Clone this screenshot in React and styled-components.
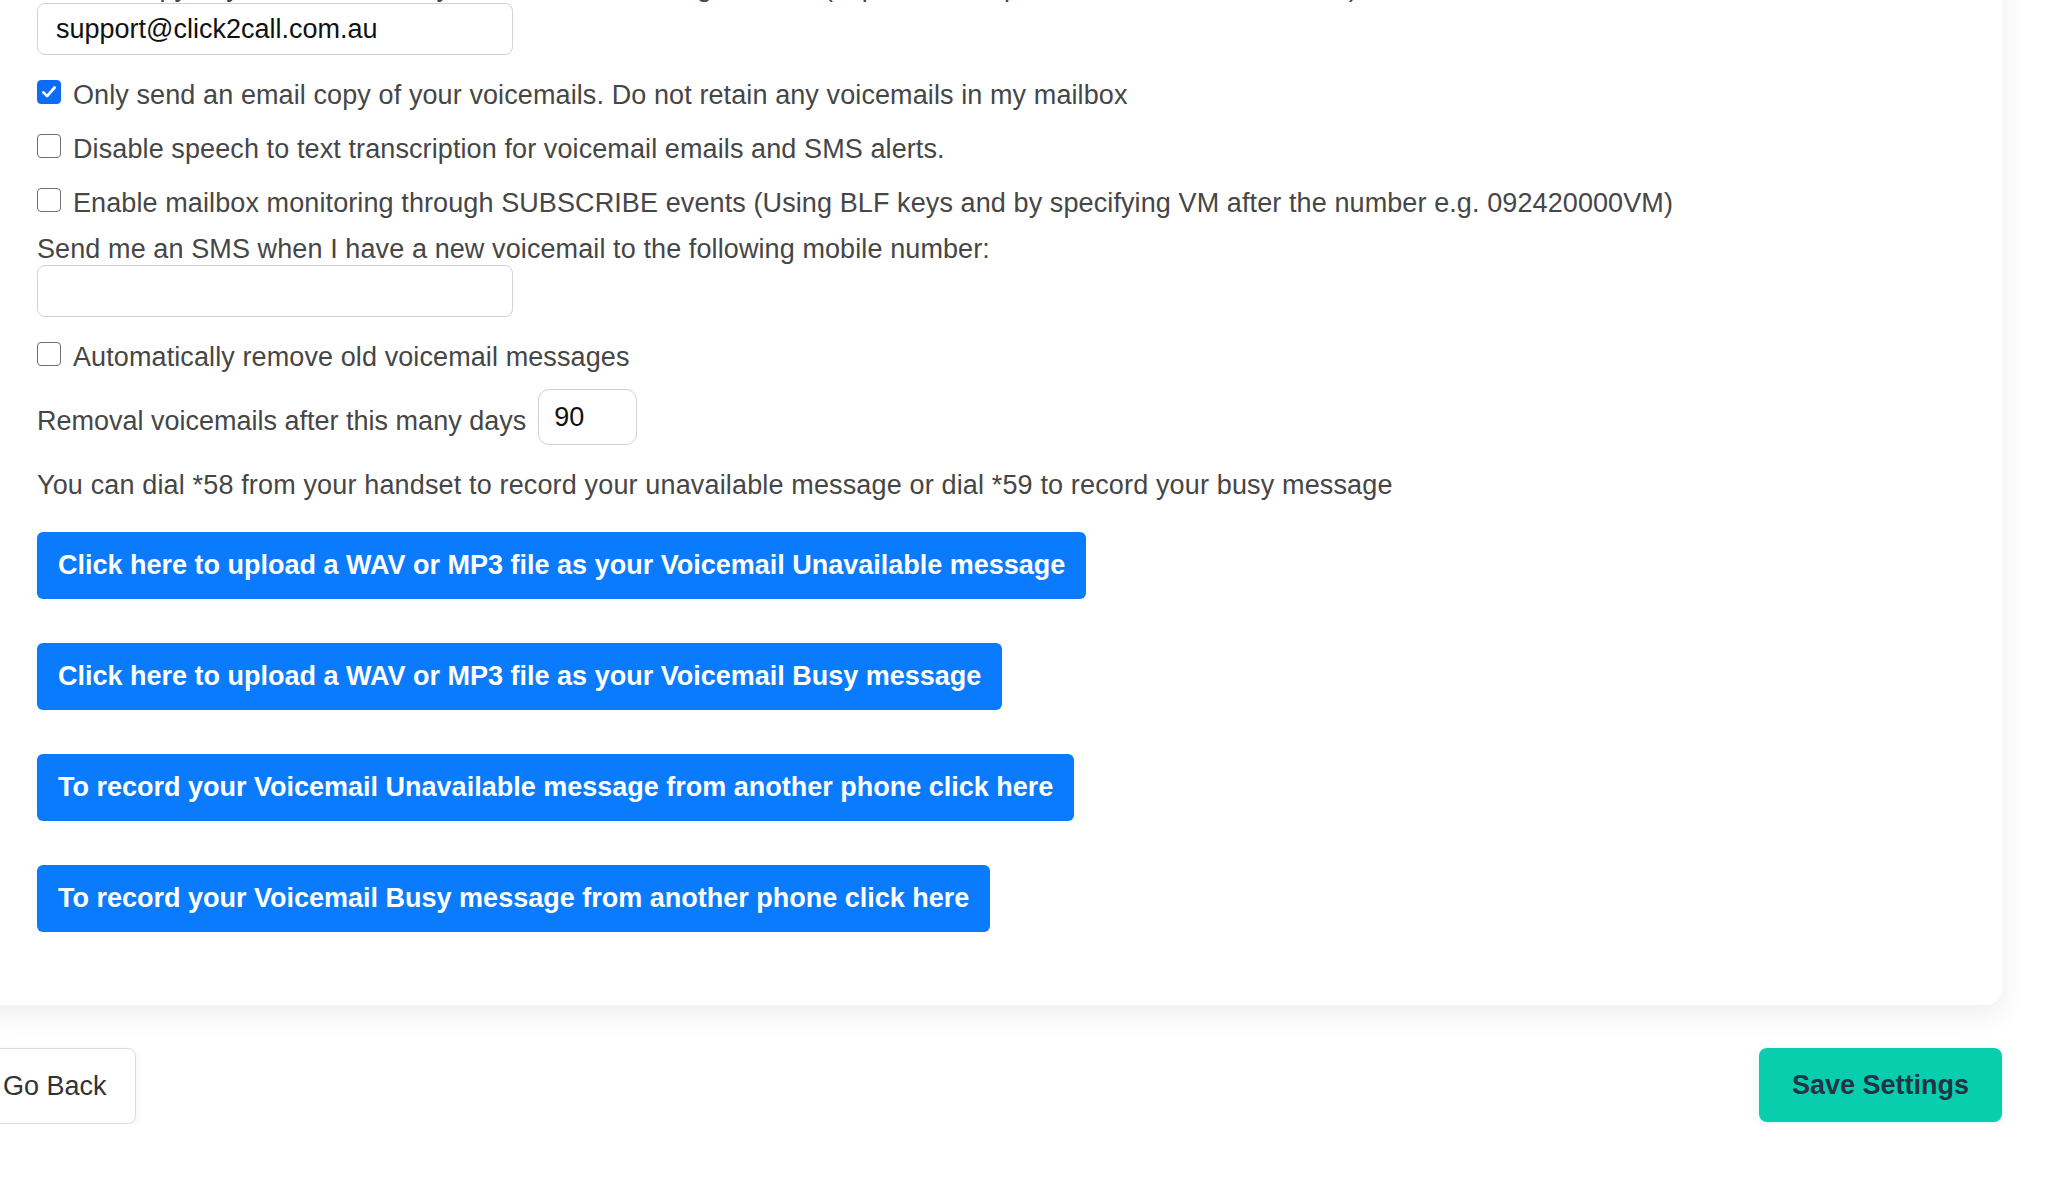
import { createGlobalStyle, styled } from 'styled-components';

const GlobalStyle = createGlobalStyle`
  html, body {
    margin: 0;
    padding: 0;
    background: #ffffff;
    overflow: hidden;
  }
  body {
    font-family: "Liberation Sans", Arial, Helvetica, sans-serif;
    font-size: 27px;
    color: #464646;
  }
`;

// the page is scrolled: card top and left edge sit outside the window
const Page = styled.div`
  width: 2028px;
  margin: -28px 0 0 -26px;
`;

const Card = styled.div`
  background: #ffffff;
  border-radius: 0 0 16px 16px;
  box-shadow: 0 10px 28px rgba(0, 0, 0, 0.07);
  padding: 0 63px 73px;
`;

const FieldLabel = styled.div`
  line-height: 31px;
  letter-spacing: 0.1px;
  margin-top: ${(p) => p.$top || 0}px;
  white-space: nowrap;
`;

const TextInput = styled.input`
  display: block;
  box-sizing: border-box;
  width: ${(p) => p.$width || 476}px;
  height: ${(p) => p.$height || 52}px;
  padding: 0 ${(p) => p.$pad || 18}px;
  border: 1px solid #d2d2d2;
  border-radius: ${(p) => p.$radius || 8}px;
  font: inherit;
  color: #111111;
  background: #ffffff;
  outline: none;
`;

const CheckRow = styled.label`
  display: flex;
  align-items: flex-start;
  gap: 12px;
  line-height: 40px;
  letter-spacing: 0.1px;
  margin-top: ${(p) => p.$top || 0}px;
  white-space: nowrap;
`;

const Box = styled.span`
  flex: none;
  box-sizing: border-box;
  width: 24px;
  height: 24px;
  margin-top: 5px;
  border-radius: 4px;
  border: 1.5px solid ${(p) => (p.$checked ? '#0b6cf5' : '#6f6f6f')};
  background: ${(p) => (p.$checked ? '#0b6cf5' : '#ffffff')};
  display: flex;
  align-items: center;
  justify-content: center;
`;

const DaysRow = styled.div`
  display: flex;
  align-items: center;
  gap: 12px;
  height: 56px;
  margin-top: 12px;
`;

const DaysText = styled.span`
  line-height: 40px;
  margin-top: 8px;
`;

const Note = styled.div`
  line-height: 40px;
  letter-spacing: 0.15px;
  margin-top: 20px;
  white-space: nowrap;
`;

const Actions = styled.div`
  display: flex;
  flex-direction: column;
  align-items: flex-start;
  gap: 44px;
  margin-top: 27px;
`;

const BlueButton = styled.button`
  font: inherit;
  font-weight: 700;
  line-height: 39px;
  padding: 14px 21px;
  color: #ffffff;
  background: #0a7bfd;
  border: none;
  border-radius: 6px;
  white-space: nowrap;
  cursor: pointer;
`;

const Footer = styled.div`
  display: flex;
  justify-content: space-between;
  align-items: flex-start;
  margin-top: 43px;
`;

const BackButton = styled.button`
  font: inherit;
  line-height: 40px;
  padding: 17px 28px;
  color: #333333;
  background: #ffffff;
  border: 1px solid #dcdcdc;
  border-radius: 8px;
  box-shadow: 0 3px 8px rgba(0, 0, 0, 0.06);
  cursor: pointer;
`;

const SaveButton = styled.button`
  font: inherit;
  font-weight: 700;
  line-height: 40px;
  padding: 17px 33px;
  color: #1f3444;
  background: #09ceae;
  border: none;
  border-radius: 8px;
  box-shadow: 0 4px 10px rgba(9, 206, 174, 0.12);
  cursor: pointer;
`;

function Check({ checked, children, top }) {
    return (
        <CheckRow $top={top}>
            <Box $checked={checked}>
                {checked && (
                    <svg width="18" height="18" viewBox="0 0 24 24">
                        <path d="M4.5 12.5l5 5L19.5 6" fill="none" stroke="#fff" strokeWidth="3.6" strokeLinecap="round" strokeLinejoin="round" />
                    </svg>
                )}
            </Box>
            <span>{children}</span>
        </CheckRow>
    );
}

export default function App() {
    return (
        <>
            <GlobalStyle />
            <Page>
                <Card>
                    <FieldLabel>
                        Send a copy of your voicemails by email to the following address (separate multiple addresses with a comma)
                    </FieldLabel>
                    <TextInput type="text" defaultValue="support@click2call.com.au" />

                    <Check checked top={20}>
                        Only send an email copy of your voicemails. Do not retain any voicemails in my mailbox
                    </Check>
                    <Check top={14}>
                        Disable speech to text transcription for voicemail emails and SMS alerts.
                    </Check>
                    <Check top={14}>
                        Enable mailbox monitoring through SUBSCRIBE events (Using BLF keys and by specifying VM after the number e.g. 092420000VM)
                    </Check>

                    <FieldLabel $top={11}>
                        Send me an SMS when I have a new voicemail to the following mobile number:
                    </FieldLabel>
                    <TextInput type="text" defaultValue="" />

                    <Check top={20}>Automatically remove old voicemail messages</Check>

                    <DaysRow>
                        <DaysText>Removal voicemails after this many days</DaysText>
                        <TextInput type="text" defaultValue="90" $width={99} $height={56} $pad={15} $radius={11} />
                    </DaysRow>

                    <Note>
                        You can dial *58 from your handset to record your unavailable message or dial *59 to record your busy message
                    </Note>

                    <Actions>
                        <BlueButton>Click here to upload a WAV or MP3 file as your Voicemail Unavailable message</BlueButton>
                        <BlueButton>Click here to upload a WAV or MP3 file as your Voicemail Busy message</BlueButton>
                        <BlueButton>To record your Voicemail Unavailable message from another phone click here</BlueButton>
                        <BlueButton>To record your Voicemail Busy message from another phone click here</BlueButton>
                    </Actions>
                </Card>

                <Footer>
                    <BackButton>Go Back</BackButton>
                    <SaveButton>Save Settings</SaveButton>
                </Footer>
            </Page>
        </>
    );
}
